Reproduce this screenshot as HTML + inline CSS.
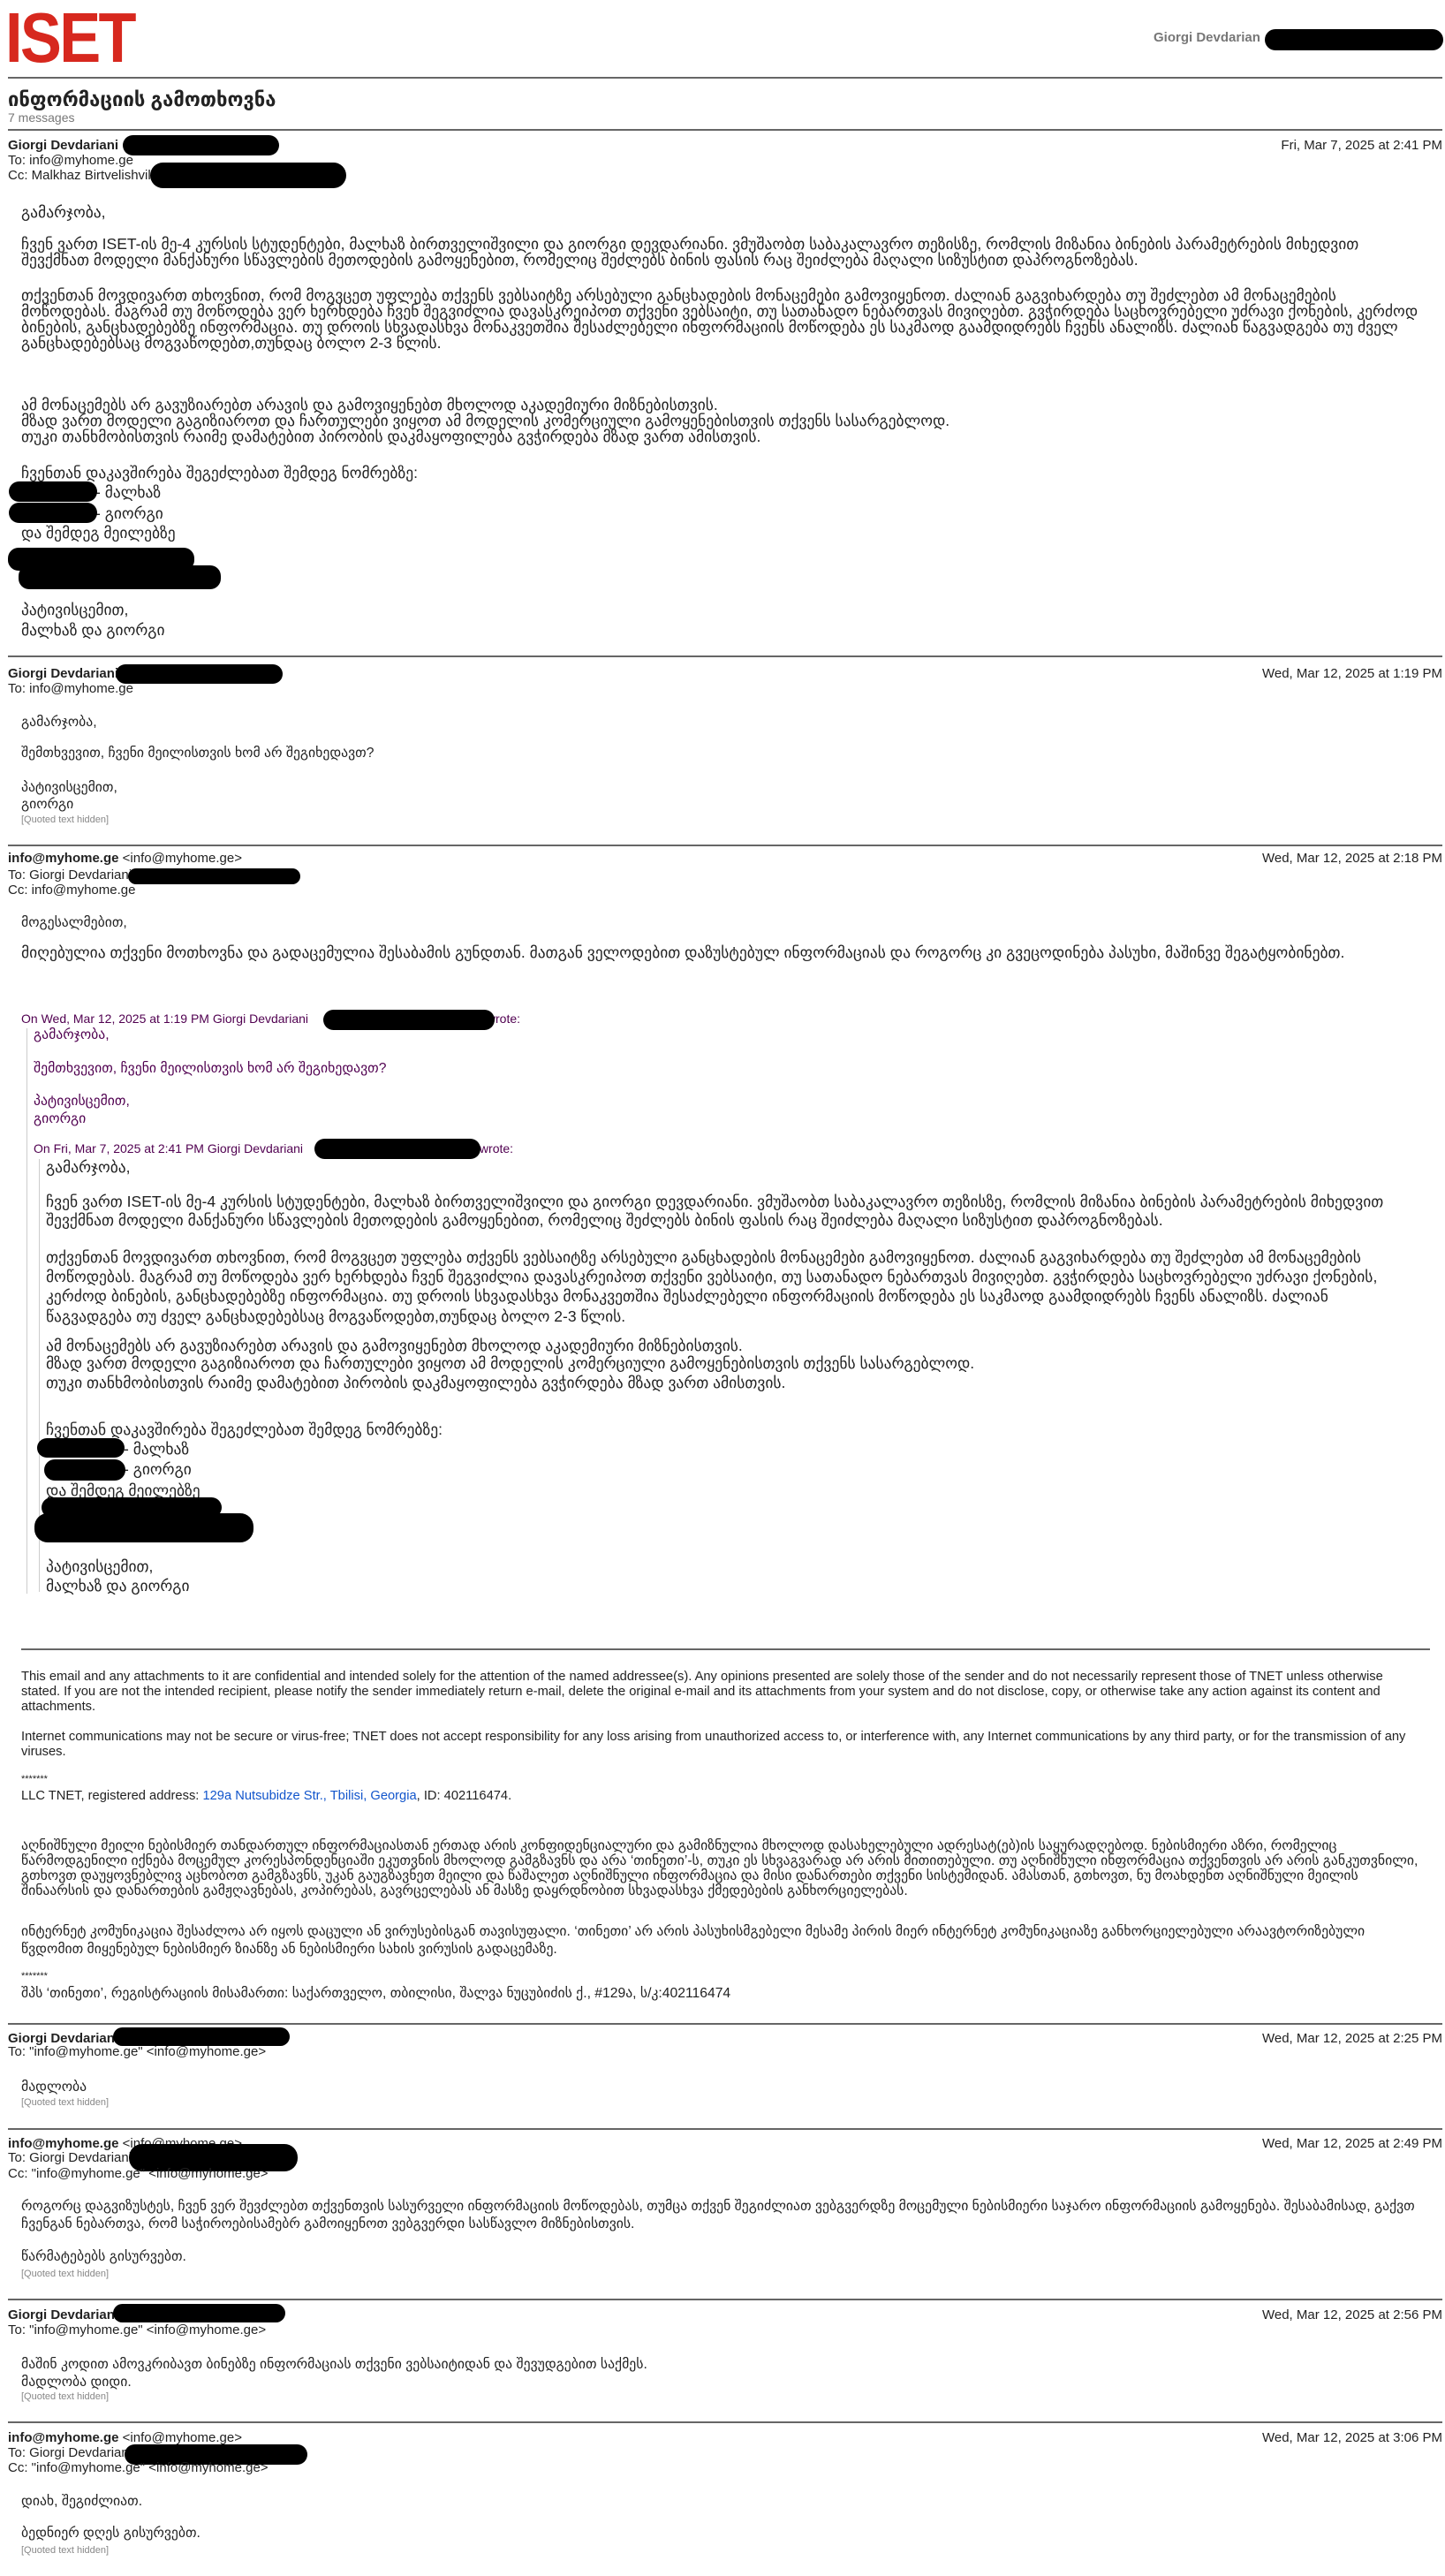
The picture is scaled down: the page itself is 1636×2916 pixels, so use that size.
<!DOCTYPE html>
<html><head><meta charset="utf-8">
<style>
html,body{margin:0;padding:0;background:#fff;}
body{width:1636px;height:2916px;position:relative;overflow:hidden;font-family:"Liberation Sans","DejaVu Sans",sans-serif;color:#222;}
.t{position:absolute;white-space:nowrap;line-height:20px;font-size:15px;}
.g{font-size:17.5px;}
.s{font-size:15.7px;}
.b{font-weight:bold;}
.q{font-size:11px;color:#888;}
.p{color:#500050;}
.hr{position:absolute;height:2px;background:#666;}
.r{position:absolute;background:#000;border-radius:12px;}
.bar{position:absolute;width:1px;background:#ccc;}
.d{position:absolute;right:3px;white-space:nowrap;line-height:20px;font-size:15px;}
.e{font-size:14.7px;line-height:18px;}
a{color:#1155cc;text-decoration:none;}
</style></head><body>

<div class="t" style="left:6px;top:0px;font-size:80px;line-height:86px;font-weight:bold;color:#d7281e;letter-spacing:-3px;transform:scaleX(0.88);transform-origin:0 0;">ISET</div>
<div class="t b" style="left:1306px;top:33px;color:#777;font-size:15px;">Giorgi Devdarian</div>
<div class="r" style="left:1432px;top:33px;width:202px;height:24px;"></div>
<div class="hr" style="left:9px;right:3px;top:87px;"></div>
<div class="t b" style="left:9px;top:101px;font-size:22px;line-height:24px;">ინფორმაციის გამოთხოვნა</div>
<div class="t" style="left:9px;top:123px;color:#777;font-size:14px;">7 messages</div>
<div class="hr" style="left:9px;right:3px;top:146px;"></div>

<!-- msg1 -->
<div class="t b" style="left:9px;top:155px;">Giorgi Devdariani</div>
<div class="r" style="left:139px;top:153px;width:177px;height:23px;"></div>
<div class="d" style="top:155px;">Fri, Mar 7, 2025 at 2:41 PM</div>
<div class="t" style="left:9px;top:172px;">To: info@myhome.ge</div>
<div class="t" style="left:9px;top:189px;">Cc: Malkhaz Birtvelishvili</div>
<div class="r" style="left:170px;top:184px;width:222px;height:29px;border-radius:15px;"></div>

<div class="t g" style="left:24px;top:230px;">გამარჯობა,</div>
<div class="t g" style="left:24px;top:266px;">ჩვენ ვართ ISET-ის მე-4 კურსის სტუდენტები, მალხაზ ბირთველიშვილი და გიორგი დევდარიანი. ვმუშაობთ საბაკალავრო თეზისზე, რომლის მიზანია ბინების პარამეტრების მიხედვით</div>
<div class="t g" style="left:24px;top:284px;">შევქმნათ მოდელი მანქანური სწავლების მეთოდების გამოყენებით, რომელიც შეძლებს ბინის ფასის რაც შეიძლება მაღალი სიზუსტით დაპროგნოზებას.</div>
<div class="t g" style="left:24px;top:324px;">თქვენთან მოვდივართ თხოვნით, რომ მოგვცეთ უფლება თქვენს ვებსაიტზე არსებული განცხადების მონაცემები გამოვიყენოთ. ძალიან გაგვიხარდება თუ შეძლებთ ამ მონაცემების</div>
<div class="t g" style="left:24px;top:342px;">მოწოდებას. მაგრამ თუ მოწოდება ვერ ხერხდება ჩვენ შეგვიძლია დავასკრეიპოთ თქვენი ვებსაიტი, თუ სათანადო ნებართვას მივიღებთ. გვჭირდება საცხოვრებელი უძრავი ქონების, კერძოდ</div>
<div class="t g" style="left:24px;top:360px;">ბინების, განცხადებებზე ინფორმაცია. თუ დროის სხვადასხვა მონაკვეთშია შესაძლებელი ინფორმაციის მოწოდება ეს საკმაოდ გაამდიდრებს ჩვენს ანალიზს. ძალიან წაგვადგება თუ ძველ</div>
<div class="t g" style="left:24px;top:378px;">განცხადებებსაც მოგვაწოდებთ,თუნდაც ბოლო 2-3 წლის.</div>
<div class="t g" style="left:24px;top:448px;">ამ მონაცემებს არ გავუზიარებთ არავის და გამოვიყენებთ მხოლოდ აკადემიური მიზნებისთვის.</div>
<div class="t g" style="left:24px;top:466px;">მზად ვართ მოდელი გაგიზიაროთ და ჩართულები ვიყოთ ამ მოდელის კომერციული გამოყენებისთვის თქვენს სასარგებლოდ.</div>
<div class="t g" style="left:24px;top:484px;">თუკი თანხმობისთვის რაიმე დამატებით პირობის დაკმაყოფილება გვჭირდება მზად ვართ ამისთვის.</div>
<div class="t g" style="left:24px;top:525px;">ჩვენთან დაკავშირება შეგეძლებათ შემდეგ ნომრებზე:</div>
<div class="t g" style="left:108px;top:547px;">- მალხაზ</div>
<div class="r" style="left:10px;top:545px;width:100px;height:23px;"></div>
<div class="t g" style="left:108px;top:571px;">- გიორგი</div>
<div class="r" style="left:10px;top:569px;width:100px;height:23px;"></div>
<div class="t g" style="left:24px;top:593px;">და შემდეგ მეილებზე</div>
<div class="r" style="left:9px;top:620px;width:211px;height:26px;"></div>
<div class="r" style="left:21px;top:640px;width:229px;height:27px;"></div>
<div class="t g" style="left:24px;top:680px;">პატივისცემით,</div>
<div class="t g" style="left:24px;top:703px;">მალხაზ და გიორგი</div>
<div class="hr" style="left:9px;right:3px;top:742px;"></div>

<!-- msg2 -->
<div class="t b" style="left:9px;top:753px;">Giorgi Devdariani</div>
<div class="r" style="left:131px;top:752px;width:189px;height:22px;"></div>
<div class="d" style="top:753px;">Wed, Mar 12, 2025 at 1:19 PM</div>
<div class="t" style="left:9px;top:770px;">To: info@myhome.ge</div>
<div class="t s" style="left:24px;top:808px;">გამარჯობა,</div>
<div class="t s" style="left:24px;top:843px;">შემთხვევით, ჩვენი მეილისთვის ხომ არ შეგიხედავთ?</div>
<div class="t s" style="left:24px;top:882px;">პატივისცემით,</div>
<div class="t s" style="left:24px;top:901px;">გიორგი</div>
<div class="t q" style="left:24px;top:918px;">[Quoted text hidden]</div>
<div class="hr" style="left:9px;right:3px;top:956px;"></div>

<!-- msg3 -->
<div class="t" style="left:9px;top:962px;"><b>info@myhome.ge</b> &lt;info@myhome.ge&gt;</div>
<div class="d" style="top:962px;">Wed, Mar 12, 2025 at 2:18 PM</div>
<div class="t" style="left:9px;top:981px;">To: Giorgi Devdariani</div>
<div class="r" style="left:145px;top:983px;width:195px;height:18px;"></div>
<div class="t" style="left:9px;top:998px;">Cc: info@myhome.ge</div>
<div class="t s" style="left:24px;top:1035px;">მოგესალმებით,</div>
<div class="t" style="left:24px;top:1068px;font-size:17.5px;">მიღებულია თქვენი მოთხოვნა და გადაცემულია შესაბამის გუნდთან. მათგან ველოდებით დაზუსტებულ ინფორმაციას და როგორც კი გვეცოდინება პასუხი, მაშინვე შეგატყობინებთ.</div>

<div class="t p" style="left:24px;top:1143px;font-size:14px;">On Wed, Mar 12, 2025 at 1:19 PM Giorgi Devdariani <span style="margin-left:198px">wrote:</span></div>
<div class="r" style="left:366px;top:1143px;width:194px;height:23px;"></div>
<div class="bar" style="left:30px;top:1164px;height:640px;"></div>
<div class="t s p" style="left:38px;top:1162px;">გამარჯობა,</div>
<div class="t s p" style="left:38px;top:1200px;">შემთხვევით, ჩვენი მეილისთვის ხომ არ შეგიხედავთ?</div>
<div class="t s p" style="left:38px;top:1237px;">პატივისცემით,</div>
<div class="t s p" style="left:38px;top:1257px;">გიორგი</div>
<div class="t p" style="left:38px;top:1290px;font-size:14px;">On Fri, Mar 7, 2025 at 2:41 PM Giorgi Devdariani <span style="margin-left:196px">wrote:</span></div>
<div class="r" style="left:356px;top:1289px;width:188px;height:23px;"></div>
<div class="bar" style="left:44px;top:1312px;height:490px;"></div>
<div class="t g" style="left:52px;top:1311px;">გამარჯობა,</div>
<div class="t g" style="left:52px;top:1350px;">ჩვენ ვართ ISET-ის მე-4 კურსის სტუდენტები, მალხაზ ბირთველიშვილი და გიორგი დევდარიანი. ვმუშაობთ საბაკალავრო თეზისზე, რომლის მიზანია ბინების პარამეტრების მიხედვით</div>
<div class="t g" style="left:52px;top:1371px;">შევქმნათ მოდელი მანქანური სწავლების მეთოდების გამოყენებით, რომელიც შეძლებს ბინის ფასის რაც შეიძლება მაღალი სიზუსტით დაპროგნოზებას.</div>
<div class="t g" style="left:52px;top:1413px;">თქვენთან მოვდივართ თხოვნით, რომ მოგვცეთ უფლება თქვენს ვებსაიტზე არსებული განცხადების მონაცემები გამოვიყენოთ. ძალიან გაგვიხარდება თუ შეძლებთ ამ მონაცემების</div>
<div class="t g" style="left:52px;top:1435px;">მოწოდებას. მაგრამ თუ მოწოდება ვერ ხერხდება ჩვენ შეგვიძლია დავასკრეიპოთ თქვენი ვებსაიტი, თუ სათანადო ნებართვას მივიღებთ. გვჭირდება საცხოვრებელი უძრავი ქონების,</div>
<div class="t g" style="left:52px;top:1457px;">კერძოდ ბინების, განცხადებებზე ინფორმაცია. თუ დროის სხვადასხვა მონაკვეთშია შესაძლებელი ინფორმაციის მოწოდება ეს საკმაოდ გაამდიდრებს ჩვენს ანალიზს. ძალიან</div>
<div class="t g" style="left:52px;top:1480px;">წაგვადგება თუ ძველ განცხადებებსაც მოგვაწოდებთ,თუნდაც ბოლო 2-3 წლის.</div>
<div class="t g" style="left:52px;top:1513px;">ამ მონაცემებს არ გავუზიარებთ არავის და გამოვიყენებთ მხოლოდ აკადემიური მიზნებისთვის.</div>
<div class="t g" style="left:52px;top:1533px;">მზად ვართ მოდელი გაგიზიაროთ და ჩართულები ვიყოთ ამ მოდელის კომერციული გამოყენებისთვის თქვენს სასარგებლოდ.</div>
<div class="t g" style="left:52px;top:1555px;">თუკი თანხმობისთვის რაიმე დამატებით პირობის დაკმაყოფილება გვჭირდება მზად ვართ ამისთვის.</div>
<div class="t g" style="left:52px;top:1608px;">ჩვენთან დაკავშირება შეგეძლებათ შემდეგ ნომრებზე:</div>
<div class="t g" style="left:140px;top:1630px;">- მალხაზ</div>
<div class="r" style="left:42px;top:1628px;width:99px;height:22px;"></div>
<div class="t g" style="left:140px;top:1653px;">- გიორგი</div>
<div class="r" style="left:50px;top:1652px;width:92px;height:24px;"></div>
<div class="t g" style="left:52px;top:1677px;">და შემდეგ მეილებზე</div>
<div class="r" style="left:47px;top:1695px;width:204px;height:23px;"></div>
<div class="r" style="left:39px;top:1713px;width:248px;height:33px;border-radius:15px;"></div>
<div class="t g" style="left:52px;top:1763px;">პატივისცემით,</div>
<div class="t g" style="left:52px;top:1785px;">მალხაზ და გიორგი</div>

<div class="hr" style="left:24px;width:1595px;top:1866px;"></div>
<div class="t e" style="left:24px;top:1889px;">This email and any attachments to it are confidential and intended solely for the attention of the named addressee(s). Any opinions presented are solely those of the sender and do not necessarily represent those of TNET unless otherwise</div>
<div class="t e" style="left:24px;top:1906px;">stated. If you are not the intended recipient, please notify the sender immediately return e-mail, delete the original e-mail and its attachments from your system and do not disclose, copy, or otherwise take any action against its content and</div>
<div class="t e" style="left:24px;top:1923px;">attachments.</div>
<div class="t e" style="left:24px;top:1957px;">Internet communications may not be secure or virus-free; TNET does not accept responsibility for any loss arising from unauthorized access to, or interference with, any Internet communications by any third party, or for the transmission of any</div>
<div class="t e" style="left:24px;top:1974px;">viruses.</div>
<div class="t" style="left:24px;top:2005px;font-size:11px;line-height:18px;">*******</div>
<div class="t e" style="left:24px;top:2024px;">LLC TNET, registered address: <a>129a Nutsubidze Str., Tbilisi, Georgia</a>, ID: 402116474.</div>
<div class="t s" style="left:24px;top:2080px;">აღნიშნული მეილი ნებისმიერ თანდართულ ინფორმაციასთან ერთად არის კონფიდენციალური და გამიზნულია მხოლოდ დასახელებული ადრესატ(ებ)ის საყურადღებოდ. ნებისმიერი აზრი, რომელიც</div>
<div class="t s" style="left:24px;top:2097px;">წარმოდგენილი იქნება მოცემულ კორესპონდენციაში ეკუთვნის მხოლოდ გამგზავნს და არა ‘თინეთი’-ს, თუკი ეს სხვაგვარად არ არის მითითებული. თუ აღნიშნული ინფორმაცია თქვენთვის არ არის განკუთვნილი,</div>
<div class="t s" style="left:24px;top:2114px;">გთხოვთ დაუყოვნებლივ აცნობოთ გამგზავნს, უკან გაუგზავნეთ მეილი და წაშალეთ აღნიშნული ინფორმაცია და მისი დანართები თქვენი სისტემიდან. ამასთან, გთხოვთ, ნუ მოახდენთ აღნიშნული მეილის</div>
<div class="t s" style="left:24px;top:2131px;">შინაარსის და დანართების გამჟღავნებას, კოპირებას, გავრცელებას ან მასზე დაყრდნობით სხვადასხვა ქმედებების განხორციელებას.</div>
<div class="t s" style="left:24px;top:2177px;">ინტერნეტ კომუნიკაცია შესაძლოა არ იყოს დაცული ან ვირუსებისგან თავისუფალი. ‘თინეთი’ არ არის პასუხისმგებელი მესამე პირის მიერ ინტერნეტ კომუნიკაციაზე განხორციელებული არაავტორიზებული</div>
<div class="t s" style="left:24px;top:2197px;">წვდომით მიყენებულ ნებისმიერ ზიანზე ან ნებისმიერი სახის ვირუსის გადაცემაზე.</div>
<div class="t" style="left:24px;top:2228px;font-size:11px;line-height:18px;">*******</div>
<div class="t s" style="left:24px;top:2247px;">შპს ‘თინეთი’, რეგისტრაციის მისამართი: საქართველო, თბილისი, შალვა ნუცუბიძის ქ., #129ა, ს/კ:402116474</div>

<div class="hr" style="left:9px;right:3px;top:2290px;"></div>
<!-- msg4 -->
<div class="t b" style="left:9px;top:2298px;">Giorgi Devdarian</div>
<div class="r" style="left:128px;top:2295px;width:200px;height:21px;"></div>
<div class="d" style="top:2298px;">Wed, Mar 12, 2025 at 2:25 PM</div>
<div class="t" style="left:9px;top:2313px;">To: "info@myhome.ge" &lt;info@myhome.ge&gt;</div>
<div class="t s" style="left:24px;top:2353px;">მადლობა</div>
<div class="t q" style="left:24px;top:2370px;">[Quoted text hidden]</div>
<div class="hr" style="left:9px;right:3px;top:2409px;"></div>
<!-- msg5 -->
<div class="t" style="left:9px;top:2417px;"><b>info@myhome.ge</b> &lt;info@myhome.ge&gt;</div>
<div class="d" style="top:2417px;">Wed, Mar 12, 2025 at 2:49 PM</div>
<div class="t" style="left:9px;top:2433px;">To: Giorgi Devdariani</div>
<div class="r" style="left:146px;top:2427px;width:191px;height:31px;border-radius:15px;"></div>
<div class="t" style="left:9px;top:2451px;">Cc: "info@myhome.ge" &lt;info@myhome.ge&gt;</div>
<div class="t s" style="left:24px;top:2488px;">როგორც დაგვიზუსტეს, ჩვენ ვერ შევძლებთ თქვენთვის სასურველი ინფორმაციის მოწოდებას, თუმცა თქვენ შეგიძლიათ ვებგვერდზე მოცემული ნებისმიერი საჯარო ინფორმაციის გამოყენება. შესაბამისად, გაქვთ</div>
<div class="t s" style="left:24px;top:2508px;">ჩვენგან ნებართვა, რომ საჭიროებისამებრ გამოიყენოთ ვებგვერდი სასწავლო მიზნებისთვის.</div>
<div class="t s" style="left:24px;top:2545px;">წარმატებებს გისურვებთ.</div>
<div class="t q" style="left:24px;top:2564px;">[Quoted text hidden]</div>
<div class="hr" style="left:9px;right:3px;top:2602px;"></div>
<!-- msg6 -->
<div class="t b" style="left:9px;top:2611px;">Giorgi Devdarian</div>
<div class="r" style="left:128px;top:2608px;width:195px;height:21px;"></div>
<div class="d" style="top:2611px;">Wed, Mar 12, 2025 at 2:56 PM</div>
<div class="t" style="left:9px;top:2628px;">To: "info@myhome.ge" &lt;info@myhome.ge&gt;</div>
<div class="t s" style="left:24px;top:2667px;">მაშინ კოდით ამოვკრიბავთ ბინებზე ინფორმაციას თქვენი ვებსაიტიდან და შევუდგებით საქმეს.</div>
<div class="t s" style="left:24px;top:2687px;">მადლობა დიდი.</div>
<div class="t q" style="left:24px;top:2703px;">[Quoted text hidden]</div>
<div class="hr" style="left:9px;right:3px;top:2741px;"></div>
<!-- msg7 -->
<div class="t" style="left:9px;top:2750px;"><b>info@myhome.ge</b> &lt;info@myhome.ge&gt;</div>
<div class="d" style="top:2750px;">Wed, Mar 12, 2025 at 3:06 PM</div>
<div class="t" style="left:9px;top:2767px;">To: Giorgi Devdarian</div>
<div class="r" style="left:141px;top:2767px;width:207px;height:23px;"></div>
<div class="t" style="left:9px;top:2784px;">Cc: "info@myhome.ge" &lt;info@myhome.ge&gt;</div>
<div class="t s" style="left:24px;top:2822px;">დიახ, შეგიძლიათ.</div>
<div class="t s" style="left:24px;top:2858px;">ბედნიერ დღეს გისურვებთ.</div>
<div class="t q" style="left:24px;top:2877px;">[Quoted text hidden]</div>

</body></html>
